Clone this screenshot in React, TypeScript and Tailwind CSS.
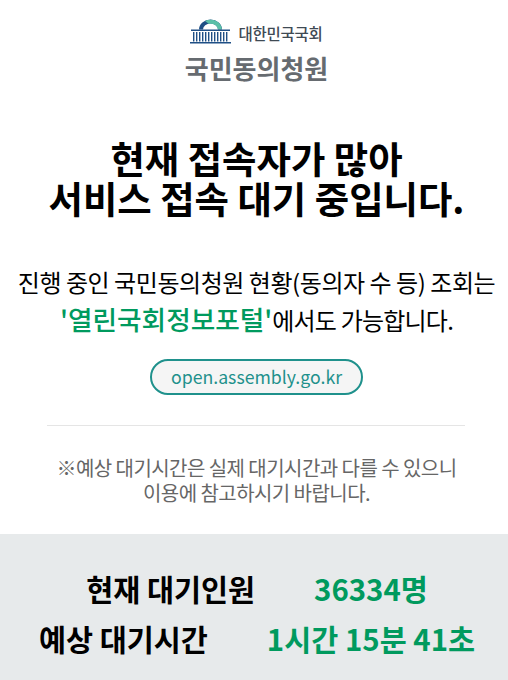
import React from "react";

const Logo = () => (
  <svg width="41" height="25" viewBox="0 0 41 25" fill="none">
    <path d="M9 10.5a11.5 10 0 0 1 23 0h-4a7.5 6 0 0 0-15 0z" fill="#1f4f85" />
    <path d="M15 2a11.5 10 0 0 1 17 8.5h-4a7.5 6 0 0 0-9-5.5z" fill="#5cc0a8" />
    <path d="M1 10.5h39v1.5H1z" fill="#1f4f85" />
    {[3, 6, 9, 12, 15, 18, 21, 24, 27, 30, 33, 36].map((x) => (
      <rect key={x} x={x} y="13" width="1.4" height="9.5" fill="#1f4f85" />
    ))}
    <path d="M0 23h41v1.5H0z" fill="#1f4f85" />
  </svg>
);

const App: React.FC = () => {
  return (
    <div className="w-[508px] h-[680px] overflow-hidden bg-white flex flex-col font-['Noto_Sans_CJK_KR',sans-serif]">
      {/* Header */}
      <div className="flex flex-col items-center pt-[19px] pl-[5px]">
        <div className="flex items-center gap-[7px] h-[25px]">
          <Logo />
          <span className="pt-[3px] text-[15.5px] leading-[24px] font-medium text-[#3f4a54] tracking-[-0.25px]">
            대한민국국회
          </span>
        </div>
        <div className="mt-[6px] text-[26px] leading-[36px] font-bold text-[#666b70]">
          국민동의청원
        </div>
      </div>

      {/* Message */}
      <h1 className="mt-[52px] pl-[5px] text-center text-[37.4px] leading-[40px] font-bold text-black">
        현재 접속자가 많아
        <br />
        서비스 접속 대기 중입니다.
      </h1>

      <p className="mt-[45px] pl-[5px] text-center text-[24px] leading-[37px] text-black tracking-[-0.45px]">
        진행 중인 국민동의청원 현황(동의자 수 등) 조회는
        <br />
        <span className="text-[26.7px] font-medium text-[#009a5e] tracking-normal">'열린국회정보포털'</span>
        <span className="tracking-[-0.8px]">에서도 가능합니다.</span>
      </p>

      <div className="mt-[21px] pl-[5px] flex justify-center">
        <a className="w-[213px] h-[36px] rounded-full border-2 border-[#1f918c] bg-[#f5f5f5] text-[#1f918c] text-[17.7px] leading-[31px] text-center">
          open.assembly.go.kr
        </a>
      </div>

      <div className="ml-[47px] w-[418px] mt-[30px] border-t border-[#e5e5e5]" />

      <p className="mt-[29px] pl-[5px] text-center text-[20px] leading-[25px] text-[#666666] tracking-[-0.55px]">
        ※예상 대기시간은 실제 대기시간과 다를 수 있으니
        <br />
        이용에 참고하시기 바랍니다.
      </p>

      {/* Waiting info */}
      <div className="mt-[29px] flex-1 bg-[#e7eaeb] pt-[32px] pl-[6px] flex flex-col gap-[5px] text-[29.4px] leading-[45px] font-bold">
        <div className="flex justify-center gap-[59px]">
          <span className="text-black">현재 대기인원</span>
          <span className="text-[#009a5e]">36334명</span>
        </div>
        <div className="flex justify-center gap-[59px]">
          <span className="text-black">예상 대기시간</span>
          <span className="text-[#009a5e]">1시간 15분 41초</span>
        </div>
      </div>
    </div>
  );
};

export default App;
